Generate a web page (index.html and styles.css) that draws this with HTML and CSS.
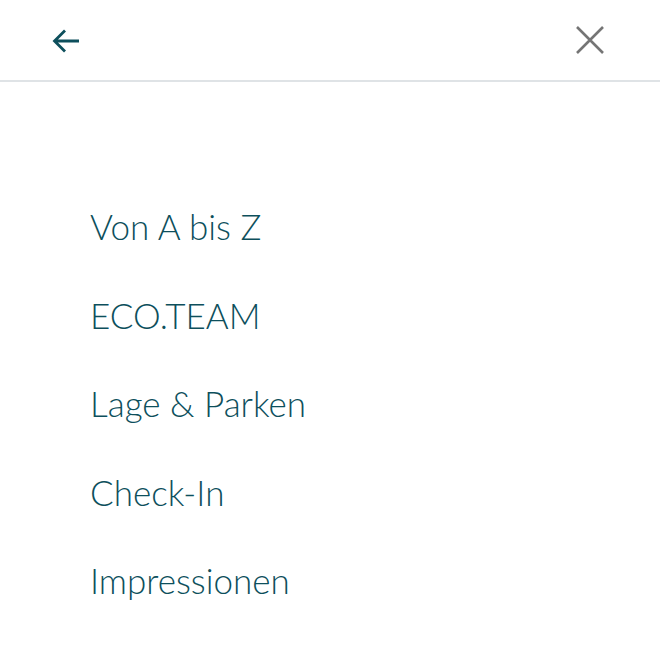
FILE: index.html
```html
<!DOCTYPE html>
<html lang="de">
<head>
<meta charset="utf-8">
<link rel="stylesheet" href="styles.css">
</head>
<body>
<header class="topbar">
  <button class="icon-btn back" aria-label="Zurück">
    <svg width="30" height="30" viewBox="0 0 30 30"><path d="M28 15H3.5M14 4.5L3.5 15 14 25.5" fill="none" stroke="#0d4f5c" stroke-width="2.8"/></svg>
  </button>
  <button class="icon-btn close" aria-label="Schließen">
    <svg width="30" height="30" viewBox="0 0 30 30"><path d="M2 2l26 26M28 2L2 28" fill="none" stroke="#757575" stroke-width="2.6"/></svg>
  </button>
</header>
<nav class="menu">
  <a class="item" href="#">Von A bis Z</a>
  <a class="item" href="#">ECO.TEAM</a>
  <a class="item" href="#">Lage &amp; Parken</a>
  <a class="item" href="#">Check-In</a>
  <a class="item" href="#">Impressionen</a>
</nav>
</body>
</html>
```
FILE: styles.css
```css
html, body { margin: 0; padding: 0; background: #fff; }
body { font-family: Lato, "Open Sans", sans-serif; }
.topbar {
  height: 80px;
  border-bottom: 2px solid #dfe3e6;
  display: flex;
  align-items: center;
  justify-content: space-between;
  padding: 0 55px 0 51px;
  box-sizing: content-box;
}
.icon-btn { background: none; border: 0; padding: 0; width: 30px; height: 30px; display: flex; }
.back { margin-top: 2px; }
.close { margin-top: -1px; }
.menu {
  display: flex;
  flex-direction: column;
  padding: 100px 0 0 90px;
}
.item {
  color: #0d4f5c;
  text-decoration: none;
  font-weight: 300;
  font-size: 35px;
  line-height: 88.5px;
}
```
